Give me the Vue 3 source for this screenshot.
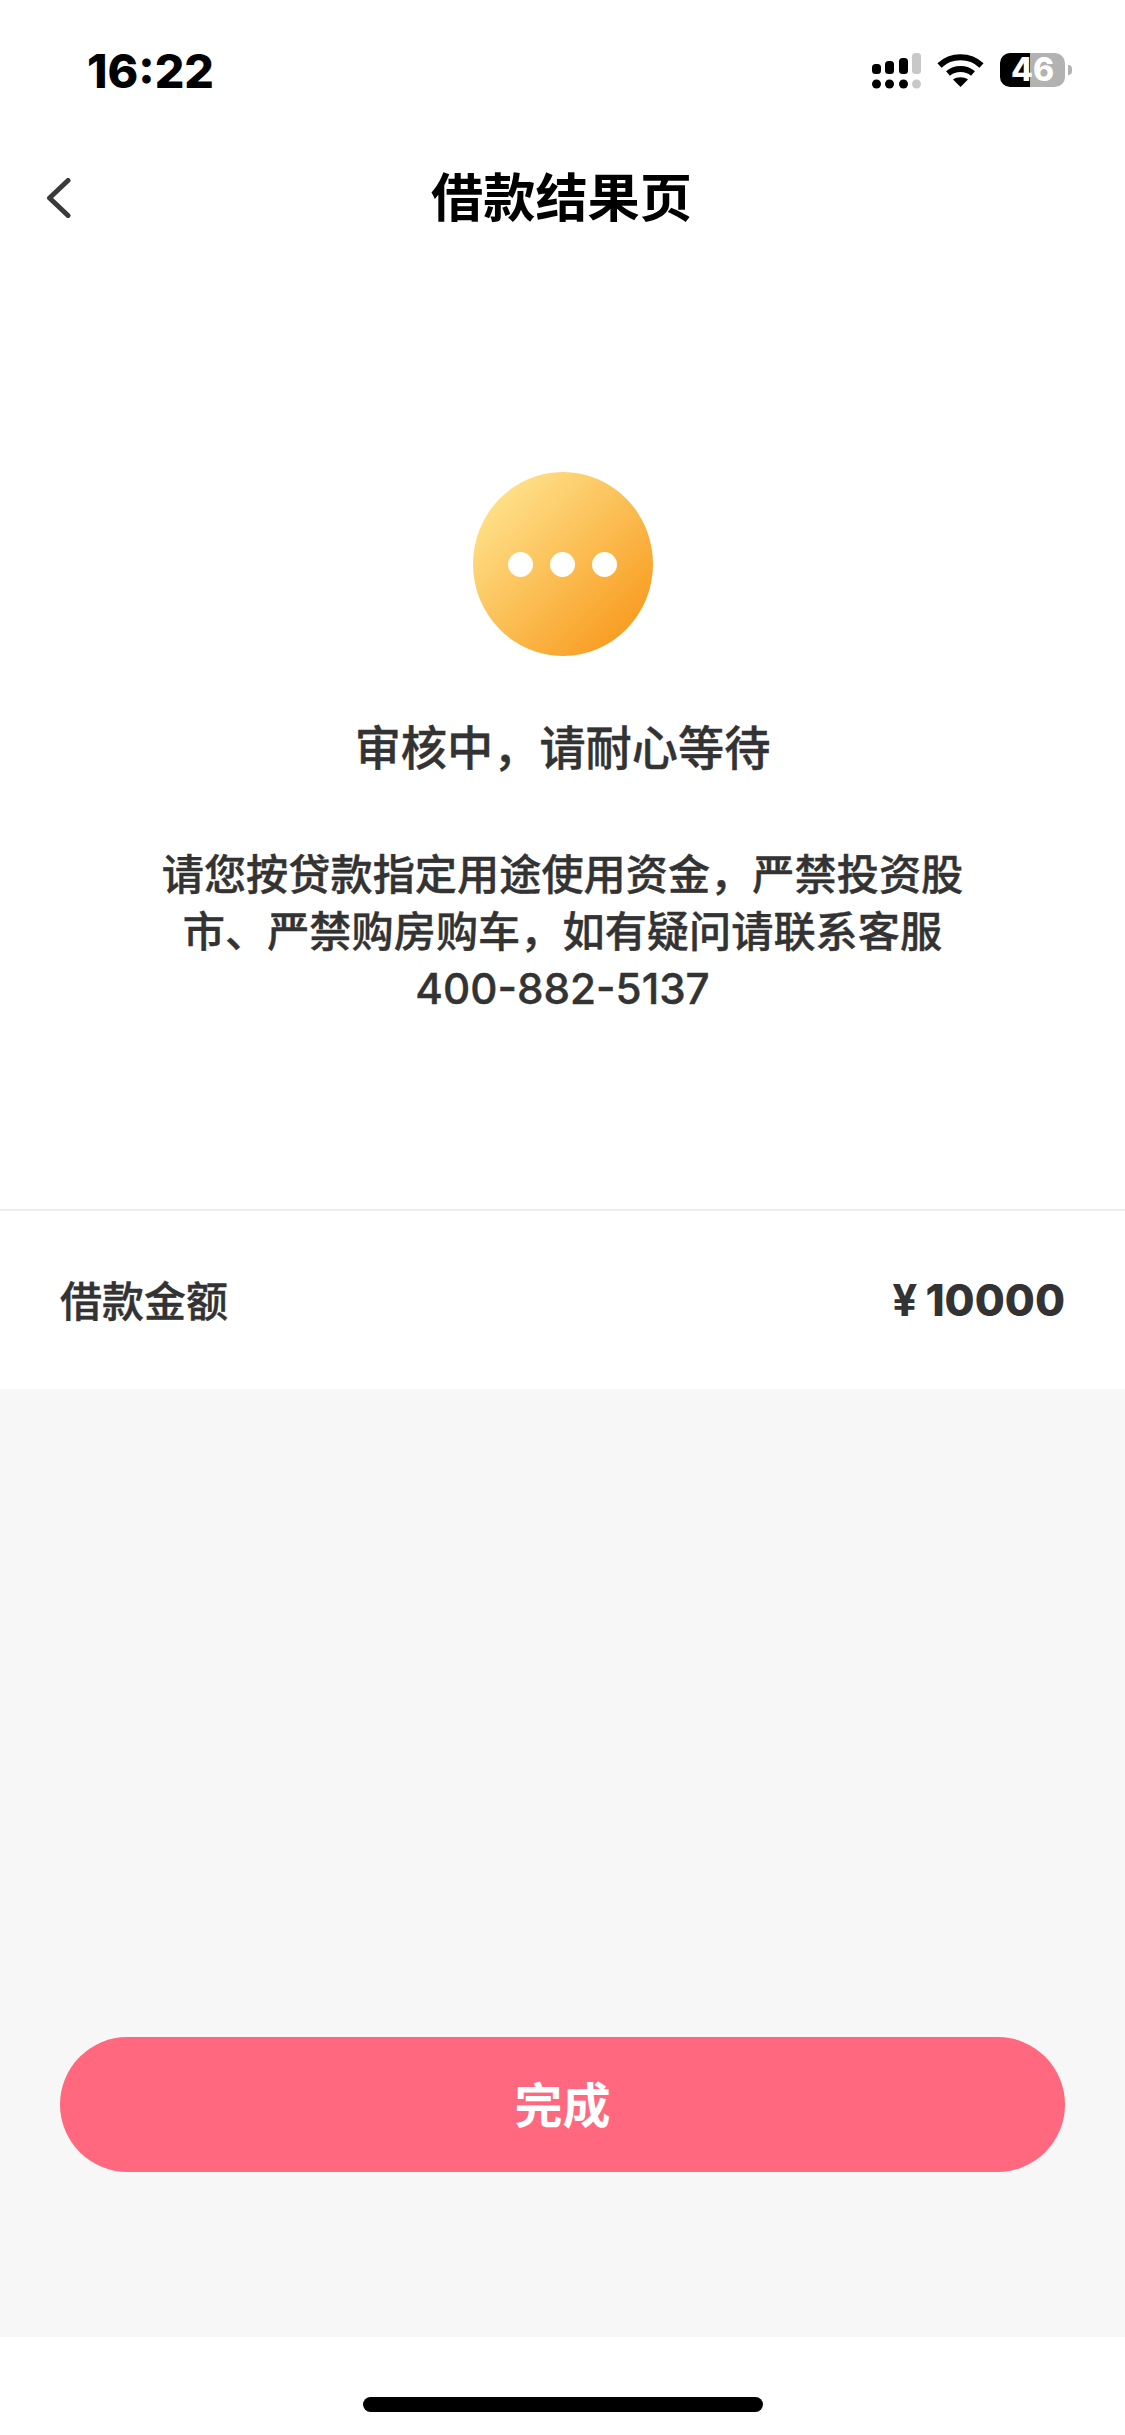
<template>
  <div class="page">
    <header class="status">
      <span class="time">16:22</span>
      <div class="status-icons">
        <svg class="signal" width="49" height="36" viewBox="0 0 49 36">
          <rect x="0" y="11" width="9" height="10" rx="3.5" fill="#000" />
          <rect x="13" y="8" width="9" height="13" rx="3.5" fill="#000" />
          <rect x="27" y="5" width="9" height="16" rx="3.5" fill="#000" />
          <rect x="40" y="0" width="9" height="21" rx="3.5" fill="#c8c8c8" />
          <circle cx="4.5" cy="31" r="4.5" fill="#000" />
          <circle cx="17.5" cy="31" r="4.5" fill="#000" />
          <circle cx="31.5" cy="31" r="4.5" fill="#000" />
          <circle cx="44.5" cy="31" r="4.5" fill="#c8c8c8" />
        </svg>
        <svg class="wifi" width="47" height="34" viewBox="0 0 47 34">
          <path d="M2.5 12.5C14 1.5 33 1.5 44.5 12.5" fill="none" stroke="#000" stroke-width="6" />
          <path d="M11 20.5C18 14.5 29 14.5 36 20.5" fill="none" stroke="#000" stroke-width="6" />
          <path d="M23.5 34L16 26.5C20 23.5 27 23.5 31 26.5Z" fill="#000" />
        </svg>
        <div class="battery"><span class="battery-level">46</span><i class="battery-nub"></i></div>
      </div>
    </header>

    <nav class="nav">
      <svg class="back" width="25" height="40" viewBox="0 0 25 40">
        <path d="M22 2.5L3.5 20L22 37.5" fill="none" stroke="#3a3a3a" stroke-width="5" stroke-linecap="round" stroke-linejoin="round" />
      </svg>
      <h1 class="nav-title">借款结果页</h1>
      <span></span>
    </nav>

    <section class="hero">
      <div class="pending"><i></i><i></i><i></i></div>
      <h2 class="hero-title">审核中，请耐心等待</h2>
      <p class="hero-text">请您按贷款指定用途使用资金，严禁投资股市、严禁购房购车，如有疑问请联系客服400-882-5137</p>
    </section>

    <section class="amount">
      <span class="amount-label">借款金额</span>
      <span class="amount-value"><span class="yen">¥</span><b>10000</b></span>
    </section>

    <main class="action">
      <button class="done" type="button">完成</button>
    </main>

    <footer class="home"><i class="home-bar"></i></footer>
  </div>
</template>

<script setup>
</script>

<style>
html, body { margin: 0; background: #fff; }
</style>

<style scoped>
.page {
  width: 1125px;
  height: 2435px;
  display: flex;
  flex-direction: column;
  background: #fff;
  font-family: Inter, "Noto Sans CJK SC", sans-serif;
  color: #333;
  overflow: hidden;
}
.status {
  height: 142px;
  box-sizing: border-box;
  padding: 53px 53px 0 87px;
  display: flex;
  justify-content: space-between;
  align-items: flex-start;
}
.time {
  font-size: 46.5px;
  line-height: 36px;
  font-weight: 800;
  color: #000;
}
.status-icons {
  display: flex;
  align-items: flex-start;
  width: 200px;
}
.signal { margin: 0 16px 0 0; display: block; }
.wifi { margin-right: 16px; display: block; }
.battery {
  position: relative;
  width: 65px;
  height: 34px;
  border-radius: 10px;
  background: linear-gradient(90deg, #000 46%, #b2b2b2 46%);
  color: #fff;
  text-align: center;
  font-size: 32px;
  line-height: 34px;
  font-weight: 800;
}
.battery-nub {
  position: absolute;
  right: -7px;
  top: 12px;
  width: 4px;
  height: 10px;
  border-radius: 0 4px 4px 0;
  background: #b2b2b2;
}
.nav {
  height: 112px;
  display: grid;
  grid-template-columns: 1fr auto 1fr;
  align-items: center;
  padding-left: 46px;
  padding-right: 46px;
}
.back { display: block; }
.nav-title {
  margin: 0;
  font-size: 52.2px;
  line-height: 64px;
  font-weight: 700;
  color: #000;
  position: relative;
  left: -1px;
}
.hero {
  display: flex;
  flex-direction: column;
  align-items: center;
  padding: 218px 0 192px;
  border-bottom: 2px solid #ededed;
}
.pending {
  width: 180px;
  height: 184px;
  border-radius: 50%;
  background: linear-gradient(135deg, #ffe590 8%, #f8981a 92%);
  display: flex;
  align-items: center;
  justify-content: center;
  gap: 17px;
}
.pending i {
  width: 25px;
  height: 25px;
  border-radius: 50%;
  background: #fff;
}
.hero-title {
  margin: 60px 0 2px;
  font-size: 46.2px;
  line-height: 64px;
  font-weight: 500;
  color: #333;
  -webkit-text-stroke: 0.4px #333;
}
.hero-text {
  margin: 64px 0 0;
  width: 820px;
  text-align: center;
  font-size: 42.2px;
  line-height: 57px;
  font-weight: 500;
  color: #333;
  -webkit-text-stroke: 0.4px #333;
}
.amount {
  height: 178px;
  display: flex;
  justify-content: space-between;
  align-items: center;
  padding: 0 60px 3px;
  box-sizing: border-box;
}
.amount-label {
  font-size: 42px;
  font-weight: 500;
  -webkit-text-stroke: 0.4px #333;
}
.amount-value {
  font-size: 43.5px;
  font-weight: 700;
  display: flex;
  align-items: baseline;
  gap: 8px;
  padding-top: 3px;
}
.amount-value .yen { font-size: 44px; }
.amount-value b {
  font-weight: 800;
}
.action {
  flex: 1;
  background: #f7f7f7;
  padding: 648px 60px 0;
}
.done {
  width: 100%;
  height: 135px;
  border: 0;
  border-radius: 68px;
  background: #ff687e;
  color: #fff;
  font-family: inherit;
  font-size: 48px;
  font-weight: 700;
  padding: 0 0 5px;
}
.home {
  height: 98px;
  display: flex;
  justify-content: center;
  padding-top: 60px;
  box-sizing: border-box;
}
.home-bar {
  width: 400px;
  height: 15px;
  border-radius: 8px;
  background: #000;
}
</style>
